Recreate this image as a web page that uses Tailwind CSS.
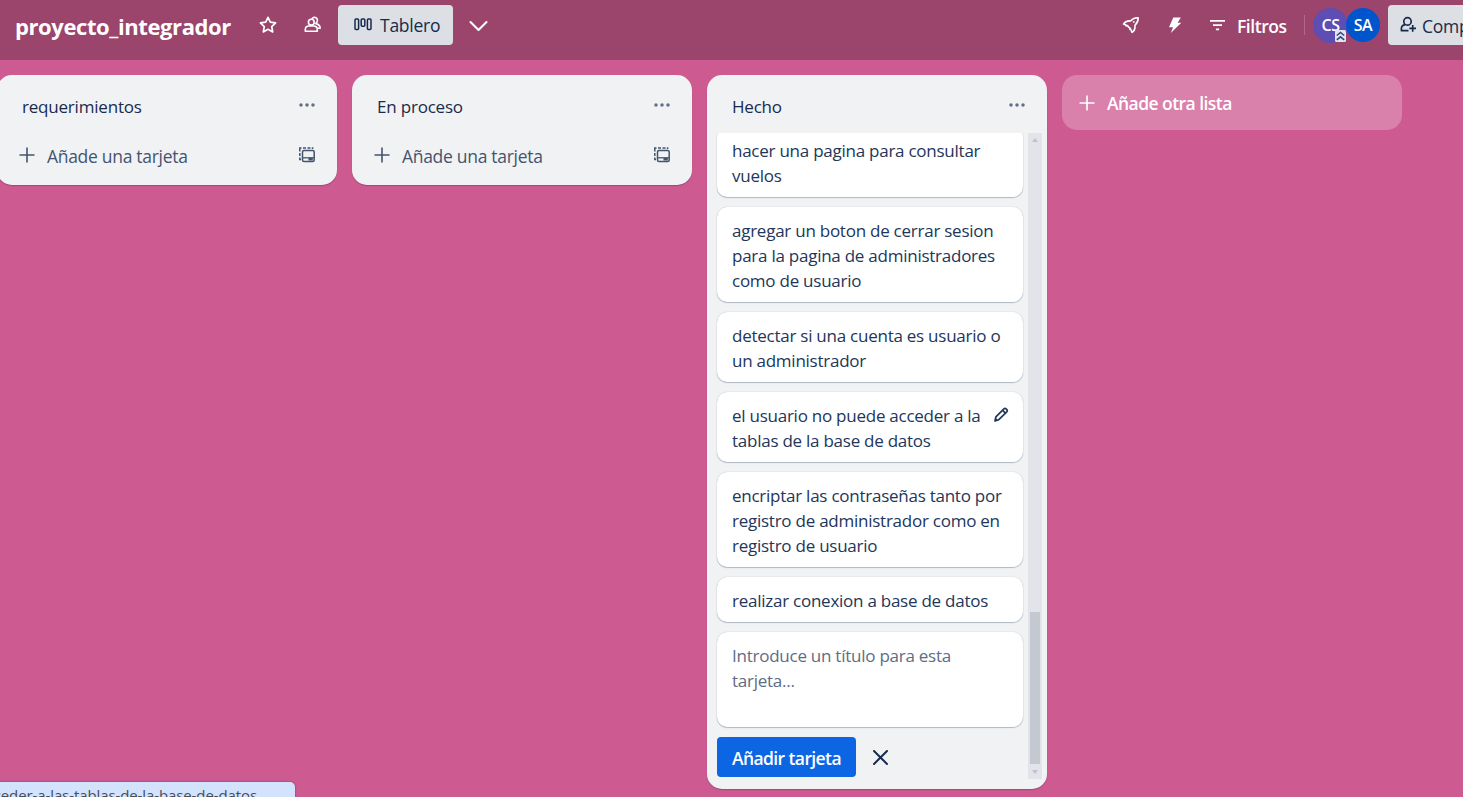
<!DOCTYPE html>
<html lang="es">
<head>
<meta charset="utf-8">
<title>proyecto_integrador</title>
<script src="https://cdn.jsdelivr.net/npm/@tailwindcss/browser@4"></script>
</head>
<body class="relative h-[797px] w-[1463px] overflow-hidden whitespace-nowrap bg-[#cd5a91] font-['Open_Sans','Noto_Sans',sans-serif] text-[17px] leading-[25px] tracking-[-0.25px] text-[#172b4d]">
<svg class="hidden">
  <symbol id="plus" viewBox="0 0 16 16"><path d="M8 .5v15M.5 8h15" fill="none" stroke="currentColor" stroke-width="1.6"/></symbol>
  <symbol id="dots" viewBox="0 0 16 4"><g fill="currentColor"><circle cx="2" cy="2" r="1.75"/><circle cx="8" cy="2" r="1.75"/><circle cx="14" cy="2" r="1.75"/></g></symbol>
  <symbol id="template" viewBox="0 0 16 16"><g fill="none" stroke="currentColor"><path d="M2 12.500H.8V10.500M.8 9V6M.8 4.500V1H2.500M4 1h3M8.500 1h3M12.800 1h.8v1" stroke-width="1.500"/><rect x="3.500" y="3.500" width="11.700" height="11" rx="1.500" stroke-width="1.500"/><path d="M4 10.800h11" stroke-width="1.300"/></g><path d="M9.500 10.800h4.300v2.700H9.500z" fill="currentColor"/></symbol>
</svg>

<header class="flex h-[60px] items-start bg-[#9b446c] pt-[5px] text-white">
  <h1 class="ml-[15px] w-[216px] shrink-0 pt-[9px] text-[22px] font-bold tracking-[-0.4px]">proyecto_integrador</h1>
  <svg class="ml-[28px] mt-[11px] size-[18px] shrink-0" viewBox="0 0 18 18" fill="none" stroke="currentColor" stroke-width="1.700" stroke-linejoin="round"><path d="M9 1.300l2.300 4.900 5.300.7-3.900 3.700 1 5.300L9 13.300l-4.700 2.600 1-5.300L1.400 6.900l5.300-.7z"/></svg>
  <svg class="ml-[27px] mt-[11px] h-[18px] w-[18px] shrink-0" viewBox="0 0 18 18" fill="none" stroke="currentColor" stroke-width="1.600" stroke-linejoin="round"><circle cx="7.300" cy="6.200" r="2.900"/><path d="M1.300 15.200v-1.700c0-2.100 1.600-3.500 3.700-3.500h4.600c2.100 0 3.700 1.400 3.700 3.500v1.700z"/><path d="M8.200 2.500c1-1.300 2.900-1.500 4.100-.5 1.400 1.100 1.600 3.200.1 4.700l-.6.900c2.700.6 4.400 2 4.400 4.700h-2.600" stroke-linecap="round"/></svg>
  <div class="ml-[16px] flex h-[40px] w-[115px] shrink-0 rounded-[4px] bg-[#dcdfe4] pl-[16px] pt-[8px] text-[#172b4d]">
    <svg class="mt-[5px] h-[13px] w-[18px]" viewBox="0 0 18 13" fill="none" stroke="currentColor" stroke-width="1.500"><rect x="1" y="1" width="3.600" height="10.500" rx="1"/><rect x="7.200" y="1" width="3.600" height="7.200" rx="1"/><rect x="13.400" y="1" width="3.600" height="10.500" rx="1"/></svg>
    <span class="ml-[8px] text-[17.500px] font-medium">Tablero</span>
  </div>
  <svg class="ml-[16px] mt-[15px] h-[12px] w-[19px] shrink-0" viewBox="0 0 19 12" fill="none" stroke="currentColor" stroke-width="2.100" stroke-linecap="round" stroke-linejoin="round"><path d="M1.500 2l8 8 8-8"/></svg>

  <svg class="ml-[634px] mt-[11px] size-[18px] shrink-0" viewBox="0 0 18 18" fill="none" stroke="currentColor" stroke-width="1.600" stroke-linejoin="round"><path d="M16.200 1.800c-3.200-.2-5.700 1-7.700 3.200-2.400-.3-5.300.5-7 3.100l4.100 1.600c.5 1.100 1.200 1.900 2.500 2.500l2 4.200c2.500-1.700 3.200-4 2.800-6.900 2-2 3.400-4.500 3.300-7.700z"/><circle cx="11.800" cy="5.900" r=".9" fill="currentColor" stroke="none"/><path d="M5.500 9.700l-2 .2M8.100 12.200l-.2 2"/></svg>
  <svg class="ml-[28px] mt-[12px] h-[17px] w-[14px] shrink-0" viewBox="0 0 14 17" fill="currentColor"><path d="M5.300.5h7.500L9.600 5.700h3.700L2.800 16l2.300-5.700H1z"/></svg>
  <svg class="ml-[28px] mt-[14px] h-[13px] w-[15px] shrink-0" viewBox="0 0 15 13" fill="none" stroke="currentColor" stroke-width="1.700"><path d="M0 1.900h15M3 6.200h9M5.900 10.300h3.200"/></svg>
  <span class="ml-[12px] w-[51px] shrink-0 pt-[9px] text-[17.500px] font-semibold tracking-[-0.45px]">Filtros</span>
  <div class="ml-[16px] mt-[10px] h-[20px] w-px shrink-0 bg-white/20"></div>
  <div class="relative ml-[8px] mt-[3px] flex shrink-0 text-center text-[16px] font-semibold leading-[35px] tracking-[-0.4px]">
    <div class="size-[35px] rounded-full bg-[#5e4db2]">CS</div>
    <div class="-ml-[2px] size-[34px] rounded-full bg-[#0055cc]">SA</div>
    <svg class="absolute left-[22px] top-[22px] h-[12px] w-[11px]" viewBox="0 0 11 12"><rect width="11" height="12" rx="1.500" fill="#dfe5f5"/><path d="M1.800 5.500l3.700-3 3.700 3M1.800 9.800l3.700-3 3.700 3" fill="none" stroke="#344878" stroke-width="1.600"/></svg>
  </div>
  <div class="ml-[8px] flex h-[40px] w-[120px] shrink-0 rounded-l-[4px] bg-[#dcdfe4] pl-[12px] pt-[9px] text-[#172b4d]">
    <svg class="mt-[2px] h-[18px] w-[17px] shrink-0" viewBox="0 0 17 18" fill="none" stroke="currentColor" stroke-width="1.700" stroke-linejoin="round"><circle cx="7.500" cy="5.400" r="3.700"/><path d="M5.300 8.600c-2.500.4-3.900 1.700-3.900 3.800v2.200h7.100M8.700 9l.7.300M12.700 9v6.800M9.300 12.400H16"/></svg>
    <span class="ml-[5px] text-[17.500px] font-medium">Compartir</span>
  </div>
</header>

<main class="-ml-[3px] flex items-start gap-[15px] pt-[15px]">
  <section class="h-[110px] w-[340px] shrink-0 rounded-[15px] bg-[#f1f2f4] shadow-[0_1px_1px_#091e4240]">
    <div class="flex pl-[25px] pt-[19px]"><h2 class="w-[277px] font-medium tracking-[-0.2px]">requerimientos</h2><svg class="mt-[9px] h-[4px] w-[16px] text-[#626f86]"><use href="#dots"/></svg></div>
    <div class="flex pl-[22px] pt-[25px] text-[#44546f]"><svg class="mt-[3px] size-[16px]"><use href="#plus"/></svg><span class="ml-[12px] w-[252px] text-[17.500px] font-medium tracking-[-0.3px]">Añade una tarjeta</span><svg class="mt-[3px] size-[16px]"><use href="#template"/></svg></div>
  </section>
  <section class="h-[110px] w-[340px] shrink-0 rounded-[15px] bg-[#f1f2f4] shadow-[0_1px_1px_#091e4240]">
    <div class="flex pl-[25px] pt-[19px]"><h2 class="w-[277px] font-medium tracking-[-0.2px]">En proceso</h2><svg class="mt-[9px] h-[4px] w-[16px] text-[#626f86]"><use href="#dots"/></svg></div>
    <div class="flex pl-[22px] pt-[25px] text-[#44546f]"><svg class="mt-[3px] size-[16px]"><use href="#plus"/></svg><span class="ml-[12px] w-[252px] text-[17.500px] font-medium tracking-[-0.3px]">Añade una tarjeta</span><svg class="mt-[3px] size-[16px]"><use href="#template"/></svg></div>
  </section>

  <section class="h-[714px] w-[340px] shrink-0 rounded-[15px] bg-[#f1f2f4] shadow-[0_1px_1px_#091e4240]">
    <div class="flex h-[58px] pl-[25px] pt-[19px]"><h2 class="w-[277px] font-medium tracking-[-0.2px]">Hecho</h2><svg class="mt-[9px] h-[4px] w-[16px] text-[#626f86]"><use href="#dots"/></svg></div>
    <div class="flex h-[646px] overflow-hidden pl-[8px]">
      <div class="-mt-[6px] flex w-[310px] shrink-0 flex-col gap-[10px] px-[2px] text-[#22365a] *:shrink-0">
        <article class="h-[70px] rounded-[10px] bg-white px-[15px] py-[11px] shadow-[0_1px_1px_#091e4240,0_0_1px_#091e424f]">hacer una pagina para consultar<br>vuelos</article>
        <article class="h-[95px] rounded-[10px] bg-white px-[15px] py-[11px] shadow-[0_1px_1px_#091e4240,0_0_1px_#091e424f]">agregar un boton de cerrar sesion<br>para la pagina de administradores<br>como de usuario</article>
        <article class="h-[70px] rounded-[10px] bg-white px-[15px] py-[11px] shadow-[0_1px_1px_#091e4240,0_0_1px_#091e424f]">detectar si una cuenta es usuario o<br>un administrador</article>
        <article class="flex h-[70px] rounded-[10px] bg-white px-[15px] py-[11px] shadow-[0_1px_1px_#091e4240,0_0_1px_#091e424f]"><p class="w-[262px] shrink-0">el usuario no puede acceder a la<br>tablas de la base de datos</p><svg class="mt-[4px] h-[15px] w-[15px] shrink-0" viewBox="0 0 15 15" fill="none" stroke="currentColor" stroke-width="1.700" stroke-linejoin="round"><path d="M1.900 9.800L9.900 1.900q1.100-1 2.200 0l.7.700q1 1.100 0 2.200l-8 7.900-3.800 1.200zM8.600 3.300l2.900 2.900"/><path d="M1 14l.7-3 2.200 2.300z" fill="currentColor" stroke="none"/></svg></article>
        <article class="h-[95px] rounded-[10px] bg-white px-[15px] py-[11px] shadow-[0_1px_1px_#091e4240,0_0_1px_#091e424f]">encriptar las contraseñas tanto por<br>registro de administrador como en<br>registro de usuario</article>
        <article class="h-[45px] rounded-[10px] bg-white px-[15px] py-[11px] shadow-[0_1px_1px_#091e4240,0_0_1px_#091e424f]">realizar conexion a base de datos</article>
        <div class="h-[95px] rounded-[10px] bg-white px-[15px] py-[11px] text-[#5e6c84] shadow-[0_1px_1px_#091e4240,0_0_1px_#091e424f]">Introduce un título para esta<br>tarjeta...</div>
        <div class="flex h-[40px] items-center text-[#172b4d]"><button class="h-[40px] w-[139px] rounded-[4px] bg-[#0c66e4] pt-[3px] text-[17.500px] font-semibold tracking-[-0.6px] text-white">Añadir tarjeta</button><svg class="ml-[17px] mt-[1px] size-[15px]" viewBox="0 0 15 15" fill="none" stroke="currentColor" stroke-width="2" stroke-linecap="round"><path d="M1 1l13 13M14 1L1 14"/></svg></div>
      </div>
      <div class="ml-[3px] flex h-[646px] w-[14px] flex-col items-center justify-between bg-[#e2e4e9] py-[5px]">
        <svg class="h-[4px] w-[6px] shrink-0" viewBox="0 0 6 4"><path d="M0 4l3-4 3 4z" fill="#bfc3cb"/></svg>
        <div class="mb-[6px] mt-auto h-[152px] w-[10px] shrink-0 bg-[#c4c8d1]"></div>
        <svg class="h-[4px] w-[6px] shrink-0" viewBox="0 0 6 4"><path d="M0 0l3 4 3-4z" fill="#bfc3cb"/></svg>
      </div>
    </div>
  </section>

  <button class="flex h-[55px] w-[340px] shrink-0 rounded-[15px] bg-[#d980ab] pl-[17px] pt-[16px] text-left text-white"><svg class="mt-[4px] size-[16px]"><use href="#plus"/></svg><span class="ml-[12px] text-[17.500px] font-semibold tracking-[-0.550px]">Añade otra lista</span></button>
</main>

<div class="absolute -left-px top-[782px] h-[30px] w-[296px] overflow-hidden rounded-tr-[5px] bg-[#d3e3fd] shadow-[0_0_2px_#0006]"><p class="absolute right-[38px] top-px text-[15px] tracking-[-0.1px] text-[#474d57]">el-usuario-no-puede-acceder-a-las-tablas-de-la-base-de-datos</p></div>
</body>
</html>
